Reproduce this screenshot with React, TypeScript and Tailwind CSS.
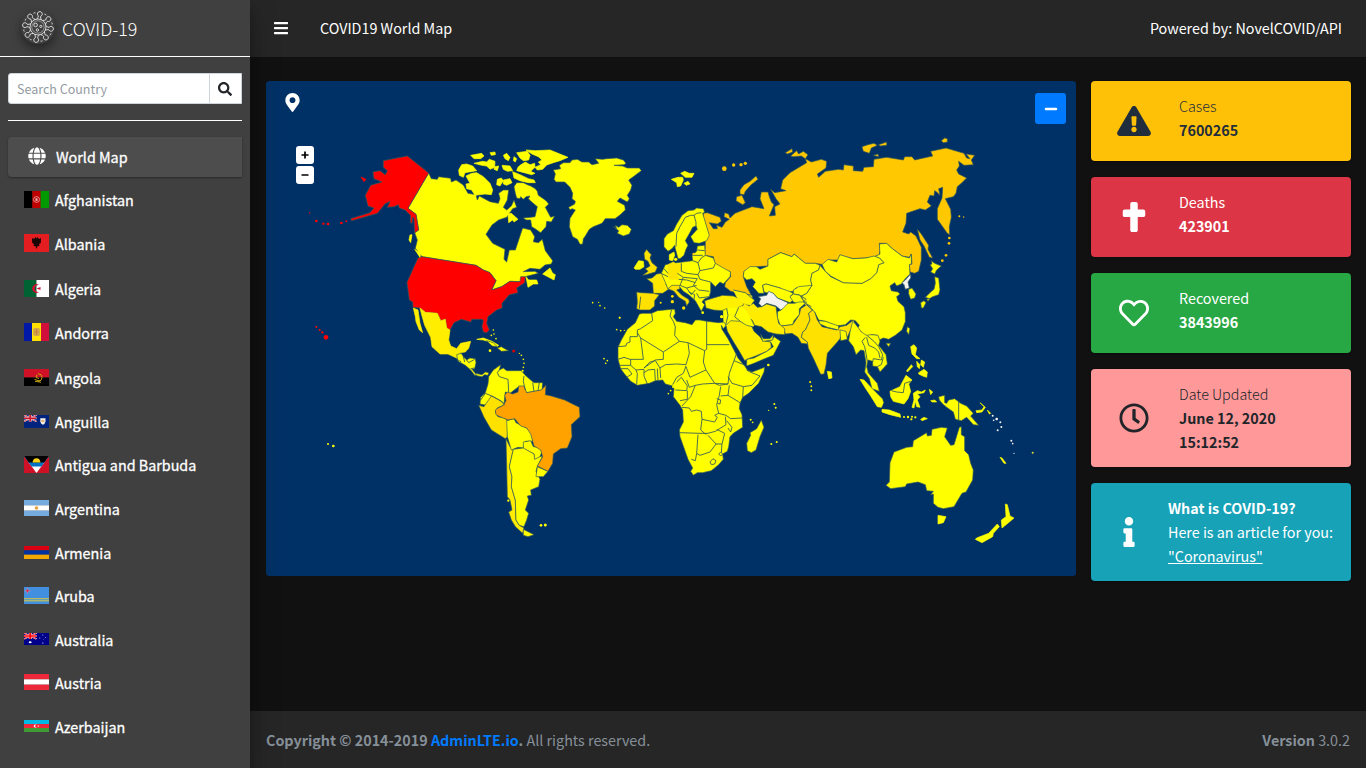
import React from "react";
import {
  FaBars,
  FaCross,
  FaExclamationTriangle,
  FaGlobe,
  FaInfo,
  FaMapMarkerAlt,
  FaMinus,
  FaRegClock,
  FaRegHeart,
  FaSearch,
} from "react-icons/fa";

const Y = "#ffff00";
const SEA = "#003166";
const LINE = "#33595a";

type Shape = [string, string];

/* Outlines shorter than islandMax characters are small islands: they are edged in their own colour. */
function Region({ x, y, shapes, lines = [], dots = [], islandMax = 0 }: {
  x: number;
  y: number;
  shapes: Shape[];
  lines?: string[];
  dots?: [number, number, number, string][];
  islandMax?: number;
}) {
  return (
    <g transform={`translate(${x} ${y}) scale(0.33333)`} strokeLinejoin="round">
      {shapes.map(([fill, points], i) => (
        <polygon key={i} points={points} fill={fill} stroke={points.length < islandMax ? fill : LINE} strokeWidth={2} />
      ))}
      {lines.map((points, i) => (
        <polyline key={i} points={points} fill="none" stroke={LINE} strokeWidth={2.6} />
      ))}
      {dots.map(([cx, cy, r, fill], i) => (
        <circle key={i} cx={cx} cy={cy} r={r} fill={fill} />
      ))}
    </g>
  );
}

const US = "#ff0000";
const RU = "#ffc800";
const IN = "#ffe100";
const NK = "#f4f3f0";

function WorldMap() {
  return (
    <svg className="block h-[495px] w-[810px]" viewBox="266 81 810 495">
      <rect x="266" y="81" width="810" height="495" fill={SEA} />
      <Region
        x={290}
        y={130}
        islandMax={200}
        shapes={[
          [Y, "416,129 424,146 442,148 446,140 482,145 484,156 498,150 520,165 534,190 558,194 562,210 568,198 600,215 625,220 630,206 626,190 640,180 656,180 652,210 640,232 650,240 664,228 672,210 680,232 668,236 650,262 626,270 606,285 588,313 608,340 645,358 642,388 650,396 658,360 676,360 698,294 722,300 734,320 730,335 745,338 757,328 766,362 788,392 784,402 765,405 750,418 720,415 700,425 735,424 745,430 705,440 690,455 660,454 635,470 605,480 618,452 600,428 580,420 558,406 396,380 376,355 382,330 374,308 386,300 378,253 354,235"],
          [US, "280,92 352,78 416,129 354,235 378,253 386,300 374,308 372,266 368,262 366,280 361,278 362,256 345,240 328,234 325,224 312,230 292,232 300,214 285,222 262,250 185,272 182,266 240,248 252,234 234,228 226,196 242,166 276,156 252,146 249,126 270,122 286,134 292,122 280,112"],
          [US, "213,141 228,148 222,155"],
          [US, "384,384 396,380 558,406 580,420 600,428 618,452 605,480 635,470 660,454 690,455 692,440 706,440 704,458 680,474 684,488 658,494 636,520 636,534 620,540 594,560 590,580 598,600 590,608 580,606 576,590 580,572 576,568 545,568 543,576 514,568 492,578 480,600 470,594 466,568 452,572 442,550 406,547 390,534 369,532 368,516 358,510 351,457"],
          ["#ffee00", "390,534 406,547 442,550 452,572 466,568 470,594 480,600 476,630 482,648 500,656 512,640 542,634 536,655 526,666 510,668 504,686 474,672 450,672 426,650 422,622 404,586 396,558"],
          ["#ffee00", "370,534 384,540 390,580 398,608 388,600 378,575 376,560"],
          [Y, "708,440 716,450 740,450 744,462 730,462 714,472"],
          [Y, "758,432 780,414 788,430 796,434 792,450"],
          [Y, "374,358 392,370 390,382"],
          [Y, "360,315 366,314 362,338 357,330"],
          [Y, "528,138 545,130 560,128 580,140 600,160 608,180 604,194 585,192 555,196 545,180 530,176 528,162 540,160"],
          [Y, "506,120 515,104 530,102 548,108 560,122 525,128 520,142 508,136"],
          [Y, "542,76 575,70 582,78 572,86 552,86"],
          [Y, "600,68 615,66 616,74 604,76"],
          [Y, "552,100 578,94 590,96 598,88 615,94 614,112 600,118 590,108 575,106"],
          [Y, "640,76 650,70 660,82 655,92 645,86"],
          [Y, "672,80 680,86 676,96 670,92"],
          [Y, "680,68 712,64 720,76 716,90 700,92 690,84"],
          [Y, "708,60 736,62 780,60 834,82 810,92 790,98 770,105 758,118 742,120 735,112 752,104 745,96 756,90 745,80 726,72"],
          [Y, "614,110 626,108 622,122 612,118"],
          [Y, "636,106 660,108 668,122 652,124 640,118"],
          [Y, "690,106 706,96 720,104 734,100 735,112 722,124 735,130 725,134 680,122 684,112"],
          [Y, "668,125 690,134 715,146 732,150 736,158 715,158 690,152 672,144"],
          [Y, "622,148 634,144 640,152 630,168 620,164"],
          [Y, "640,150 660,146 666,158 650,166 640,162"],
          [Y, "672,170 680,158 700,158 712,164 722,168 736,176 742,184 745,196 760,206 770,214 776,222 766,232 782,262 794,258 784,276 770,274 768,290 752,308 735,296 725,290 722,270 708,270 700,264 722,262 735,260 742,230 725,216 715,206 720,198 708,200 700,208 692,200 690,206 680,204 676,190"],
          [Y, "654,252 664,250 684,268 672,276 668,270 656,278"],
          [Y, "560,628 580,624 606,634 626,646 622,650 600,636 580,630"],
        ]}
        dots={[
          [59, 249, 2, US], [79, 273, 4, US], [100, 281, 3.5, US], [114, 282, 4, US], [154, 279, 4, US], [169, 274, 3, US],
          [79, 591, 3, US], [89, 600, 3, US], [97, 607, 3.5, US], [108, 622, 7, US],
          [610, 600, 2.5, Y], [612, 612, 2.5, Y], [618, 626, 2.5, Y], [604, 616, 2.5, Y],
          [114, 942, 3, Y], [130, 948, 4, Y],
        ]}
      />
      <Region
        x={740}
        y={130}
        shapes={[
          [RU, "-110,250 -98,248 -60,262 -56,274 -68,282 -92,278 -80,296 -68,296 -70,286 -54,292 -44,276 -32,268 -48,260 -46,248 -34,252 -30,264 -15,250 0,244 36,230 72,236 60,206 64,186 84,186 88,200 94,216 102,224 88,258 106,256 104,230 120,222 108,206 92,178 104,188 138,182 122,176 128,150 150,128 200,98 196,86 214,96 244,88 260,94 258,114 232,132 236,142 256,124 296,118 310,120 312,104 340,108 340,122 368,124 372,112 400,110 402,88 440,82 490,90 494,80 516,80 524,90 578,78 572,64 618,54 672,70 680,84 690,86 678,72 704,76 694,90 700,104 672,106 656,94 658,108 650,120 656,132 668,138 680,144 664,160 652,170 648,190 640,200 616,206 632,238 634,262 628,290 629,314 622,310 592,268 592,236 606,204 608,172 596,176 600,196 590,186 584,182 582,198 570,196 562,216 574,228 556,240 540,236 500,250 498,280 488,306 506,312 512,306 528,318 544,352 544,390 536,424 524,430 510,426 508,404 516,402 514,372 508,382 486,378 452,352 440,340 418,340 420,360 418,374 404,380 376,384 338,386 300,376 296,390 268,390 250,404 226,400 196,400 162,372 156,380 122,368 84,388 84,408 50,410 12,424 10,440 20,470 34,495 -10,488 -28,484 -46,470 -44,458 -28,440 -30,424 -66,424 -78,412 -76,400 -80,380 -106,376 -104,340 -104,326 -94,314 -110,262"],
          [RU, "0,180 12,164 30,154 48,138 54,148 32,166 16,184 12,194 0,192"],
          [RU, "-10,200 6,196 16,218 8,224 -12,212"],
          [RU, "136,68 156,56 158,66 142,72"],
          [RU, "152,78 170,62 176,72 190,64 204,74 196,86 184,78 160,80"],
          [RU, "366,50 384,44 402,40 412,46 394,54 388,70 370,64"],
          [RU, "416,44 440,36 440,46 420,48"],
          [RU, "400,76 414,72 416,80"],
          [RU, "604,32 614,24 622,26 622,36 610,38"],
          [RU, "532,298 544,312 566,346 564,358 578,384 568,382 552,348 540,330"],
          [Y, "10,440 12,424 30,410 50,410 60,418 84,408 84,388 122,368 156,380 162,372 196,400 226,400 240,406 236,420 216,430 212,450 216,468 196,472 168,474 160,484 140,486 120,474 78,462 68,466 70,480 72,490 56,490 44,476 38,470 46,456 36,446 20,450"],
          [Y, "240,406 256,424 272,440 310,458 366,460 392,446 410,428 416,404 432,398 418,384 404,380 420,372 418,342 440,340 452,352 486,378 508,384 514,372 514,402 508,404 510,432 496,446 484,462 470,468 464,458 450,468 454,482 474,486 480,492 470,500 474,514 492,530 496,548 496,575 486,600 466,616 446,628 430,624 418,630 412,616 394,614 380,622 366,620 364,606 352,596 358,586 346,572 332,570 316,584 290,588 256,574 236,570 224,546 198,530 184,498 200,490 216,466 212,450 216,430 236,420"],
          [Y, "246,404 264,388 290,396 300,374 338,386 378,384 402,378 418,384 432,398 416,404 410,428 392,446 366,460 310,458 272,438 256,424"],
          [NK, "512,432 512,444 504,456 508,474 496,478 492,464 486,458 496,450"],
          [Y, "506,478 516,474 528,492 524,504 512,508 506,492"],
          [Y, "570,404 576,402 574,392 584,400 604,408 590,420 584,432 572,426 578,416"],
          [Y, "584,440 596,444 600,480 596,494 578,500 568,506 556,502 572,486 582,478 586,460"],
          [Y, "542,518 552,512 558,518 550,534 544,534"],
          [Y, "560,508 570,506 564,514"],
          [Y, "502,590 510,596 506,614 500,604"],
          [Y, "438,640 452,640 446,650"],
          [Y, "68,466 78,462 120,474 148,484 160,490 150,500 162,508 150,518 112,504 100,490 80,488 72,486"],
          [NK, "62,506 54,500 80,496 86,484 100,490 112,504 144,518 140,532 122,540 108,528 80,520 66,530 56,520"],
          [Y, "160,480 176,470 216,466 200,490 184,498 176,494 160,492"],
          [Y, "150,500 160,492 180,496 190,512 196,520 176,522 160,516"],
          ["#fff400", "0,490 36,496 38,508 44,512 34,522 20,524 8,516 -4,506"],
          [Y, "112,545 124,540 144,520 164,520 176,516 200,516 196,520 178,536 178,554 162,572 158,584 122,588 112,564"],
          [IN, "122,588 158,584 178,554 182,536 200,524 218,540 206,550 210,570 196,600 188,606 184,622 202,636 204,642 184,640 174,622 156,610 136,612 130,596"],
          ["#ffec00", "-2,520 10,518 28,528 40,520 52,532 66,530 80,522 108,530 112,560 116,580 134,596 134,614 108,612 84,606 64,590 44,586 36,570 16,556"],
          [IN, "200,524 224,546 232,570 246,590 290,600 300,590 320,586 340,570 346,584 330,604 322,622 316,610 306,606 300,626 292,636 262,670 258,706 252,732 242,733 220,685 205,655 202,636 184,622 188,606 196,600 210,570 206,550 218,540"],
          [Y, "236,572 256,574 296,588 296,600 262,592 240,582"],
          [Y, "300,600 318,604 322,628 302,632"],
        ]}
        lines={["184,498 198,508 190,516 214,530"]}
        dots={[
          [-47, 116, 7, RU], [-19, 105, 5, RU], [3, 104, 5, RU], [16, 100, 5, RU],
          [628, 324, 4, RU], [627, 340, 4, RU], [618, 376, 4, RU], [607, 392, 4, RU], [658, 259, 3, RU], [671, 261, 2, RU],
        ]}
      />
      <Region
        x={540}
        y={130}
        islandMax={72}
        shapes={[
          [Y, "40,120 62,116 58,106 70,98 90,98 96,90 112,88 126,96 146,96 156,104 176,100 166,86 188,88 200,86 230,84 250,90 258,100 252,104 222,106 248,108 262,114 298,114 304,122 280,140 266,150 276,166 272,180 262,196 268,206 262,216 240,204 232,214 254,226 256,240 240,255 225,266 196,266 186,280 160,290 148,298 136,318 130,326 128,342 120,343 112,328 98,320 88,290 90,265 106,240 96,236 90,240 86,232 104,222 106,214 96,206 98,190 90,172 74,156 48,156 42,148 46,132"],
          [Y, "220,290 230,296 226,286 236,292 246,284 262,286 274,298 268,312 250,318 232,310 236,302"],
          [Y, "394,148 414,142 428,142 430,150 422,168 412,170 410,158"],
          [Y, "422,130 434,124 448,130 462,130 456,142 436,142"],
          [Y, "432,160 444,154 450,162 438,166"],
          [Y, "282,414 296,392 310,394 312,410 300,418 286,418"],
          [IN, "312,370 320,358 326,366 334,374 330,384 336,398 352,412 346,426 318,434 308,436 324,424 316,416 330,408 324,394 314,388"],
          [Y, "372,326 382,312 400,302 410,282 426,256 444,242 462,240 470,234 490,236 494,246 488,250 500,290 508,316 500,332 478,340 462,338 452,320 464,306 472,298 468,288 458,292 452,304 444,318 436,332 444,346 438,358 432,376 420,386 414,386 406,356 404,346 396,356 384,364 372,350"],
          [Y, "388,374 402,366 404,376 398,392 388,390"],
          ["#ffe800", "320,446 336,444 350,432 364,430 384,440 384,456 378,462 386,478 368,490 340,490 338,460"],
          [IN, "290,486 302,488 340,490 358,494 344,512 344,528 330,540 300,540 290,536 292,516"],
          [Y, "364,430 376,404 400,400 458,392 456,376 470,364 472,348 494,346 496,376 520,384 526,400 550,414 572,426 570,440 550,462 540,456 526,470 512,456 512,484 508,500 492,508 486,516 494,524 484,544 476,530 466,512 446,494 430,484 420,472 400,480 384,478 378,462"],
          ["#ffe600", "384,404 400,396 412,404 424,400 424,424 412,430 416,448 388,448 384,430"],
          [IN, "384,476 396,466 418,466 420,476 410,480 426,496 446,508 448,516 440,528 436,514 416,502 402,484"],
          ["#fff000", "494,512 520,504 548,496 580,498 610,510 610,526 590,534 560,536 546,542 520,540 498,534"],
          [Y, "550,542 566,534 606,530 620,544 642,588 620,590 580,576 552,590"],
          ["#fff400", "580,480 616,488 640,508 632,526 610,520 590,500"],
        ]}
        lines={[
          "408,350 410,310 420,290 436,262 452,256 462,256 468,276 468,290",
          "462,256 470,250 484,248",
          "302,500 298,536",
          "424,400 424,424 440,430 474,434 480,422 474,398 458,392",
          "474,398 484,384 496,376", "480,422 520,414 526,400", "474,434 480,448 512,456",
          "412,430 430,442 472,446", "416,448 440,450 466,458", "430,442 420,466 440,474 470,466",
          "472,446 460,466 476,480 508,484", "440,474 454,494 466,480", "470,490 478,504 508,500",
          "364,430 384,440", "372,416 384,430", "456,376 488,376", "472,360 494,362", "446,486 464,494 462,508",
          "560,536 564,556 556,590", "596,532 584,560 620,590", "580,480 616,488 640,508",
        ]}
        dots={[
          [158, 518, 2.5, Y], [176, 517, 2, Y], [180, 527, 2.5, Y], [194, 534, 2.5, Y], [239, 563, 3, Y],
          [407, 388, 5, Y], [461, 372, 4, RU], [397, 499, 4, IN], [397, 515, 5, IN], [431, 534, 5, IN], [362, 518, 3, IN],
          [488, 548, 4, Y], [545, 560, 5, Y], [500, 522, 3, Y],
        ]}
      />
      <Region
        x={600}
        y={290}
        shapes={[
          [Y, "64,150 82,118 106,98 118,72 128,70 155,70 172,62 215,58 224,58 226,70 220,80 230,94 256,98 276,104 286,90 300,90 320,94 356,98 372,96 378,106 370,116 364,106 366,118 384,146 402,180 414,204 436,230 442,240 456,246 494,232 492,246 476,280 446,310 428,322 420,340 418,356 426,374 428,412 400,430 390,440 386,470 382,484 368,492 370,508 356,524 334,542 308,548 292,548 280,556 272,544 278,534 264,508 252,474 240,440 238,420 250,396 248,360 240,346 220,320 222,296 218,288 196,282 188,270 166,272 148,280 112,286 92,274 72,250 62,236 54,208 54,172"],
          [Y, "440,208 462,204 500,184 520,170 512,156 488,152 516,150 522,140 542,154 520,196 490,208 462,220 440,228"],
          ["#ffee00", "378,106 392,92 420,94 440,106 456,110 462,124 480,140 488,152 512,156 514,172 500,184 462,200 440,208 434,212 418,184 402,158 382,124"],
          [Y, "482,132 490,146 510,146 520,134 518,150 488,154"],
          [Y, "484,390 492,412 480,440 468,480 454,488 442,482 440,460 452,436 450,428 470,416"],
        ]}
        lines={[
          "155,70 158,92 122,116 112,120 112,140 90,140 90,156 80,160 78,168 54,170",
          "112,128 122,144 190,186 238,154 224,136 226,110 220,94 210,78 215,58",
          "122,144 130,208 90,208 72,202 54,208",
          "190,186 190,208 166,210 132,234",
          "238,154 264,158 314,182 320,178 320,94",
          "320,164 388,164",
          "264,158 268,190 258,224 230,222 196,224 180,234",
          "314,182 310,216 318,240 300,248 270,262 258,230",
          "318,240 344,280 384,282 388,250 402,212 410,190",
          "402,212 436,226",
          "384,260 396,280 430,290 456,286 480,258 450,246 440,240",
          "384,282 358,286 344,280 308,282 286,286 268,292 260,270",
          "286,286 272,320 246,348",
          "226,300 260,302 262,288 244,262 230,276",
          "262,302 262,328 240,332",
          "246,352 268,354 274,364 290,360 304,364 306,388 344,396 352,382 344,376 356,370 350,344 358,316 362,290",
          "362,318 384,316 388,286",
          "384,316 420,338",
          "430,290 428,322",
          "356,370 378,376 392,386 426,384",
          "306,388 302,420 316,432 346,424 378,404 376,380",
          "238,428 300,430 322,430",
          "294,434 290,490 286,512 274,508",
          "290,490 300,496 330,486 348,462 324,436",
          "348,462 366,462 374,430 350,418",
          "366,462 364,488",
          "380,392 396,412 392,426 384,414",
          "92,208 92,226 60,226",
          "60,236 84,236 96,252 80,262",
          "92,226 108,240 112,250 110,284",
          "108,240 132,238 132,258 142,282",
          "132,248 144,240 164,238 166,272",
          "172,236 174,270",
          "180,234 182,264",
          "132,234 150,216 166,212 180,234",
          "258,228 250,250 230,262 218,284",
          "339,506 348,512 344,522 334,524 330,516 339,506",
          "362,486 368,492 362,498 356,492 362,486",
          "350,326 362,330 360,342 352,340",
        ]}
        dots={[
          [50, 119, 2.5, Y], [62, 122, 2.5, Y], [73, 121, 2, Y], [59, 83, 2.5, Y], [12, 206, 2.5, Y], [22, 212, 2.5, Y], [17, 220, 2.5, Y],
          [219, 291, 3, Y], [212, 302, 2.5, Y], [205, 311, 2.5, Y], [505, 225, 4, Y],
          [631, 276, 2.5, Y], [634, 289, 2.5, Y], [634, 301, 2.5, Y], [523, 342, 3, Y], [527, 353, 3, Y], [506, 361, 2, Y],
          [452, 389, 3, Y], [458, 397, 2.5, Y], [514, 462, 3, Y], [530, 456, 3, Y],
        ]}
      />
      <Region
        x={800}
        y={320}
        islandMax={150}
        shapes={[
          [Y, "158,4 168,14 184,36 200,46 214,44 234,46 240,64 236,76 258,104 262,132 240,156 232,140 218,138 218,124 204,120 200,140 206,160 216,172 232,190 238,214 216,206 208,176 194,156 198,128 192,92 182,90 168,104 160,80 146,62 150,36"],
          [Y, "82,154 94,156 96,174 86,176"],
          [Y, "180,178 192,180 216,206 246,236 250,248 244,262 232,260 212,228 196,204"],
          [Y, "246,268 268,270 300,282 302,292 270,284 246,276"],
          [Y, "270,214 278,210 300,200 318,166 336,180 326,192 332,214 324,236 312,252 280,244 272,230"],
          [Y, "340,220 352,212 364,216 376,210 372,218 352,222 360,230 352,240 360,262 350,260 346,244 342,264 336,262 342,240"],
          [Y, "332,80 342,74 350,84 346,104 360,116 350,116 336,102"],
          [Y, "350,124 360,134 358,146 352,140"],
          [Y, "364,120 374,126 370,142 362,134"],
          [Y, "356,158 372,148 382,156 380,172 368,168 356,162"],
          [Y, "334,134 338,140 322,156 320,152"],
          [Y, "388,208 398,216 392,224"],
          [Y, "392,242 404,240 410,246 396,246"],
          [Y, "362,298 372,292 382,296 366,302"],
          [Y, "416,230 434,226 434,248 440,250 446,240 464,236 482,250 500,258 520,280 512,288 536,316 520,314 500,292 484,302 466,298 460,276 440,262 428,252 418,240"],
          [Y, "528,272 546,270 552,260 540,248 556,262 546,276 530,278"],
          [Y, "562,270 572,280 568,282"],
          [Y, "600,412 606,414 618,430 612,430"],
          [Y, "338,380 340,362 380,338 382,348 394,346 396,328 424,322 442,324 434,350 452,376 462,374 478,322 484,320 484,344 494,350 494,392 506,404 512,430 520,450 518,480 498,516 486,520 462,560 430,566 414,562 400,550 400,522 392,524 400,514 380,512 376,494 354,486 320,492 316,500 272,506 258,496 268,486 270,428 282,396 320,382"],
          [Y, "414,586 438,590 430,608 414,612"],
          [Y, "616,552 622,554 630,588 642,594 628,606 606,624 604,600 618,590"],
          [Y, "592,612 598,620 580,640 578,650 546,668 526,658 530,654 566,640"],
        ]}
        lines={[
          "196,52 186,64 194,80 198,100 202,124",
          "200,46 210,54 224,66 236,80 248,104 244,120 220,116 218,126",
          "200,52 206,76 224,84 236,96 240,114",
          "232,140 244,134 250,112",
          "274,212 290,216 310,218 314,190 332,184",
          "476,246 476,302",
          "202,156 212,160",
        ]}
        dots={[
          [312, 291, 3, Y], [324, 291, 3.5, Y], [334, 298, 3.5, Y], [346, 292, 3.5, Y], [336, 290, 3, Y],
          [30, 186, 2.5, Y], [34, 199, 2.5, Y], [34, 211, 2.5, Y],
          [578, 287, 3, NK], [590, 297, 4, NK], [601, 307, 3, NK], [604, 321, 3, NK], [593, 331, 3, NK], [581, 301, 2.5, NK],
          [634, 362, 3, NK], [638, 371, 2.5, NK], [642, 400, 2, NK], [698, 398, 3, "#dce22c"],
        ]}
      />
      <Region
        x={460}
        y={340}
        shapes={[
          [Y, "-10,44 4,40 10,50 20,60 30,54 46,56 48,68 44,86 36,88 46,100 66,104 76,96 86,98 84,106 74,104 66,110 44,106 32,90 16,76 -6,64"],
          [Y, "86,110 100,90 122,74 118,90 130,84 140,92 184,92 196,106 212,120 222,128 248,128 246,150 200,158 190,140 176,140 150,160 136,156 132,192 110,184 96,170 80,196 60,192 62,172 76,158 84,132"],
          [IN, "56,196 72,200 94,168 114,178 128,186 134,194 112,204 106,216 114,230 134,234 144,244 142,290 136,296 94,270 72,232"],
          ["#ffec00", "138,296 150,320 160,328 148,380 156,410 154,440 166,480 168,540 178,556 192,564 188,580 166,560 154,540 146,516 156,510 150,480 142,470 140,380"],
          [Y, "140,242 162,236 168,248 200,264 216,280 218,304 196,304 190,324 174,322 154,330 142,290"],
          [Y, "190,306 212,302 220,320 236,322 246,334 240,350 236,358 222,358 222,342 190,326"],
          [Y, "160,328 190,324 222,342 224,358 240,350 248,348 232,380 228,394 240,418 236,440 212,450 214,466 202,468 206,480 196,510 206,520 200,540 192,560 178,556 168,540 166,480 154,440 156,410 148,380"],
          [Y, "190,568 222,584 204,590 190,586"],
          [Y, "232,380 264,394 250,410 228,410"],
          ["#ffa200", "114,204 130,196 138,182 134,166 142,156 158,162 174,156 176,138 192,138 200,158 222,154 244,150 258,136 256,164 274,168 314,180 358,202 360,230 334,254 336,290 322,324 302,326 280,342 278,370 264,394 232,378 248,350 242,330 222,318 212,282 200,264 182,258 164,236 144,240 120,230 108,224 106,210"],
          [Y, "80,2 100,8 112,20 96,18"],
          [Y, "112,24 124,20 134,26 146,32 124,34"],
        ]}
        lines={[
          "118,90 112,98 118,110 144,118 146,156",
          "62,180 76,160 100,170 124,184 134,196",
          "192,108 190,124 196,150",
          "218,128 222,154",
          "238,128 234,152",
          "10,50 14,66", "20,60 26,68 44,58", "44,84 32,86", "46,100 50,108", "-10,58 4,66",
        ]}
        dots={[
          [90, 32, 4, Y], [161, 33, 4.5, "#d60000"], [178, 40, 2, Y], [184, 46, 2.5, Y], [190, 58, 2.5, Y], [192, 70, 2.5, Y], [190, 82, 2.5, Y], [188, 92, 3, Y],
          [243, 556, 4, Y], [256, 555, 4.5, Y], [145, 482, 3.5, Y],
        ]}
      />
    </svg>
  );
}

function Virus() {
  const spikes = [0, 45, 90, 135, 180, 225, 270, 315];
  return (
    <svg className="h-[34px] w-[34px] rounded-full shadow-[0_3px_6px_rgba(0,0,0,0.16),0_6px_12px_rgba(0,0,0,0.3)]" viewBox="-17 -17 34 34" fill="none" stroke="#ececec" strokeWidth="0.85">
      <circle r="8" />
      <circle r="6.2" strokeWidth="0.5" />
      {spikes.map((a) => (
        <g key={a} transform={`rotate(${a + 8})`}>
          <path d="M-2.4 -7.7 Q-1.1 -9 -1.1 -11 A2.4 2.4 0 1 1 1.1 -11 Q1.1 -9 2.4 -7.7" />
          <path d="M4.6 -13.6 q1.2 -.4 1.8 .9" strokeWidth="0.8" />
        </g>
      ))}
      <circle cx="-2.4" cy="-2" r="1.8" />
      <circle cx="2.8" cy="-.6" r="1.1" />
      <circle cx="-.6" cy="3" r="1.2" />
    </svg>
  );
}

function Stripes({ colors, vertical = false }: { colors: string[]; vertical?: boolean }) {
  const n = colors.length;
  return (
    <>
      {colors.map((c, i) =>
        vertical ? (
          <rect key={i} x={(25 / n) * i} y="0" width={25 / n + 0.05} height="18" fill={c} />
        ) : (
          <rect key={i} x="0" y={(18 / n) * i} width="25" height={18 / n + 0.05} fill={c} />
        )
      )}
    </>
  );
}

function UnionJack({ red }: { red: string }) {
  return (
    <>
      <path d="M0 0 L12.5 9 M12.5 0 L0 9" stroke="#fff" strokeWidth="2" />
      <path d="M0 0 L12.5 9 M12.5 0 L0 9" stroke={red} strokeWidth="0.9" />
      <path d="M6.25 0 V9 M0 4.5 H12.5" stroke="#fff" strokeWidth="3" />
      <path d="M6.25 0 V9 M0 4.5 H12.5" stroke={red} strokeWidth="2" />
    </>
  );
}

type Country = { name: string; row: string; flag: string; art: React.ReactNode };

const countries: Country[] = [
  {
    name: "Afghanistan", row: "h-[44px]", flag: "h-[17px]",
    art: (
      <>
        <Stripes vertical colors={["#000", "#bf0000", "#009900"]} />
        <circle cx="12.5" cy="9" r="3" fill="none" stroke="#e6a0a0" strokeWidth="0.9" />
        <rect x="11.5" y="7.8" width="2" height="2.6" fill="#efc0c0" />
      </>
    ),
  },
  {
    name: "Albania", row: "h-[45px]", flag: "h-[18px]",
    art: (
      <>
        <rect width="25" height="18" fill="#e41e20" />
        <path d="M8 4 L10 5 L11.5 3 L12.5 4.5 L13.5 3 L15 5 L17 4 L16.8 9 L15 10 L15.5 12 L13.6 12 L12.5 15 L11.4 12 L9.5 12 L10 10 L8.2 9z" fill="#1a0505" />
      </>
    ),
  },
  {
    name: "Algeria", row: "h-[44px]", flag: "h-[17px]",
    art: (
      <>
        <Stripes vertical colors={["#006233", "#fff"]} />
        <path d="M15 5.4 A4.2 4.5 0 1 0 15 12.6 A3.5 3.7 0 1 1 15 5.4z" fill="#d21034" />
        <path d="M12.6 9 L16.5 7.4 V10.6z" fill="#d21034" />
      </>
    ),
  },
  {
    name: "Andorra", row: "h-[45px]", flag: "h-[18px]",
    art: (
      <>
        <rect width="25" height="18" fill="#0018a8" />
        <rect x="8" width="17" height="18" fill="#fedf00" />
        <rect x="17" width="8" height="18" fill="#d0103a" />
        <rect x="9.2" y="5" width="6.6" height="8" rx="1.5" fill="#d0a648" />
        <path d="M12.5 6 V12 M10 9 H15" stroke="#c7813f" />
      </>
    ),
  },
  {
    name: "Angola", row: "h-[44px]", flag: "h-[17px]",
    art: (
      <>
        <Stripes colors={["#ce1126", "#000"]} />
        <path d="M14 5 A4 4 0 0 1 14 13 M11 13 L17 14 M13 6 L12 9 L15 10 M10.5 11 L16 13" fill="none" stroke="#c8a20c" strokeWidth="1" />
      </>
    ),
  },
  {
    name: "Anguilla", row: "h-[43px]", flag: "h-[13px]",
    art: (
      <>
        <rect width="25" height="18" fill="#00247d" />
        <UnionJack red="#cf142b" />
        <path d="M16.3 4.5 H21.5 V9 Q21 12.5 18.9 13.5 Q16.5 12 16.3 9z" fill="#f4f4ee" />
        <circle cx="18.9" cy="8.2" r="1.7" fill="#e8b070" />
      </>
    ),
  },
  {
    name: "Antigua and Barbuda", row: "h-[44px]", flag: "h-[17px]",
    art: (
      <>
        <rect width="25" height="18" fill="#ce1126" />
        <path d="M0 0 H25 L12.5 18z" fill="#fff" />
        <path d="M0 0 H25 L17.4 11 H7.6z" fill="#0072c6" />
        <path d="M0 0 H25 L20.2 7 H4.8z" fill="#000" />
        <path d="M8.5 7 Q9 2.5 12.5 2.5 Q16 2.5 16.5 7z" fill="#fcd116" />
      </>
    ),
  },
  {
    name: "Argentina", row: "h-[44px]", flag: "h-[16px]",
    art: (
      <>
        <Stripes colors={["#74acdf", "#fff", "#74acdf"]} />
        <circle cx="12.5" cy="9" r="1.9" fill="#e2a544" />
      </>
    ),
  },
  { name: "Armenia", row: "h-[43px]", flag: "h-[13px]", art: <Stripes colors={["#d90012", "#0033a0", "#f2a800"]} /> },
  {
    name: "Aruba", row: "h-[44px]", flag: "h-[17px]",
    art: (
      <>
        <rect width="25" height="18" fill="#418fde" />
        <rect y="11.8" width="25" height="1.2" fill="#cfc34a" />
        <rect y="14" width="25" height="1.2" fill="#cfc34a" />
        <path d="M3.5 1 L4.3 3.2 L6.5 4 L4.3 4.8 L3.5 7 L2.7 4.8 L.7 4 L2.7 3.2z" fill="#d22a4a" stroke="#e8c0d8" strokeWidth=".3" />
      </>
    ),
  },
  {
    name: "Australia", row: "h-[43px]", flag: "h-[12px]",
    art: (
      <>
        <rect width="25" height="18" fill="#00008b" />
        <UnionJack red="#ff0000" />
        <circle cx="6.2" cy="13.8" r="1.5" fill="#fff" />
        <g fill="#c8c8ea">
          <circle cx="18.8" cy="3" r=".7" />
          <circle cx="15.8" cy="7.6" r=".7" />
          <circle cx="21.6" cy="6.6" r=".7" />
          <circle cx="19.6" cy="9.4" r=".5" />
          <circle cx="18.8" cy="15" r=".8" />
        </g>
      </>
    ),
  },
  { name: "Austria", row: "h-[44px]", flag: "h-[16px]", art: <Stripes colors={["#ed2939", "#fff", "#ed2939"]} /> },
  {
    name: "Azerbaijan", row: "h-[40px]", flag: "h-[12px]",
    art: (
      <>
        <Stripes colors={["#00b9e4", "#ed2939", "#3f9c35"]} />
        <path d="M12.8 7.2 A2 2.2 0 1 0 12.8 10.8 A1.6 1.7 0 1 1 12.8 7.2z" fill="#fff" />
        <circle cx="14.3" cy="9" r=".9" fill="#fff" />
      </>
    ),
  },
];

function InfoBox({ className, icon, iconBox, text = "", children }: {
  className: string;
  icon: React.ReactNode;
  iconBox: string;
  text?: string;
  children: React.ReactNode;
}) {
  return (
    <div className={`flex rounded p-2 shadow-[0_0_1px_rgba(0,0,0,0.125),0_1px_3px_rgba(0,0,0,0.2)] ${className}`}>
      <div className={`flex shrink-0 items-center justify-center text-[30px] ${iconBox}`}>{icon}</div>
      <div className={`flex flex-col justify-center whitespace-nowrap pl-2.5 leading-6 ${text}`}>{children}</div>
    </div>
  );
}

export default function App() {
  return (
    <div className="flex h-screen w-full overflow-hidden bg-[#111111] font-['Noto_Sans_CJK_JP','Noto_Sans_CJK_SC',sans-serif] text-[14.33px] leading-6 text-white">
      <aside className="z-10 flex h-full w-[250px] shrink-0 flex-col bg-[#404040] shadow-[0_14px_28px_rgba(0,0,0,0.25),0_10px_10px_rgba(0,0,0,0.22)]">
        <div className="flex h-[57px] shrink-0 items-center border-b border-white pl-[21px]">
          <div className="-mt-0.5"><Virus /></div>
          <span className="ml-[7px] text-[17.9px] font-light">COVID-19</span>
        </div>
        <div className="mx-2 mt-4 flex h-[31px] shrink-0 rounded-l-[3px] border border-[#ced4da] bg-white">
          <div className="flex-1 pl-2 text-[12.5px] leading-[30px] text-[#939ba2]">Search Country</div>
          <div className="flex w-8 items-center justify-center border-l border-[#ced4da] pr-0.5 text-[14px] text-[#212529]">
            <FaSearch />
          </div>
        </div>
        <div className="mx-2 mt-4 h-px shrink-0 bg-white" />
        <div className="ml-2 mr-2 mt-4 flex h-10 shrink-0 items-center rounded-l bg-[#4d4d4d] shadow-[0_1px_3px_rgba(0,0,0,0.12),0_1px_2px_rgba(0,0,0,0.24)]">
          <FaGlobe className="-mt-0.5 ml-5 text-[18px]" />
          <span className="ml-[10px] [-webkit-text-stroke:0.3px_white]">World Map</span>
        </div>
        <nav className="flex flex-col pl-6 pt-[11px]">
          {countries.map((c) => (
            <div key={c.name} className={`flex shrink-0 items-start ${c.row}`}>
              <div className="flex h-[22px] w-[25px] items-center">
                <svg className={`block w-[25px] ${c.flag}`} viewBox="0 0 25 18" preserveAspectRatio="none">
                  {c.art}
                </svg>
              </div>
              <span className="ml-1.5 [-webkit-text-stroke:0.3px_white]">{c.name}</span>
            </div>
          ))}
        </nav>
      </aside>

      <div className="flex min-w-0 flex-1 flex-col">
        <header className="flex h-[57px] shrink-0 items-center bg-[#262626] px-6 pb-0.5">
          <FaBars className="w-[14px] text-[16px]" />
          <span className="ml-8">COVID19 World Map</span>
          <span className="ml-auto">Powered by: NovelCOVID/API</span>
        </header>

        <main className="flex flex-1 items-start gap-[15px] px-4 pt-6">
          <section className="relative h-[495px] w-[810px] shrink-0 overflow-hidden rounded bg-[#003166]">
            <WorldMap />
            <FaMapMarkerAlt className="absolute left-[17px] top-[12px] text-[19px]" />
            <button className="absolute right-2.5 top-3 flex h-[31px] w-[31px] items-center justify-center rounded-[3px] bg-[#007bff] text-[14px]">
              <FaMinus />
            </button>
            <div className="absolute left-[30px] top-[65px] flex flex-col gap-0.5 text-black">
              <span className="flex h-[18px] w-[18px] items-center justify-center rounded-[3px] bg-white">
                <svg className="h-2 w-2" viewBox="0 0 8 8"><path d="M4 0.5V7.5M0.5 4H7.5" stroke="#000" strokeWidth="1.7" /></svg>
              </span>
              <span className="flex h-[18px] w-[18px] items-center justify-center rounded-[3px] bg-white">
                <svg className="h-2 w-2" viewBox="0 0 8 8"><path d="M0.5 4H7.5" stroke="#000" strokeWidth="1.7" /></svg>
              </span>
            </div>
          </section>

          <section className="flex w-[260px] shrink-0 flex-col gap-4">
            <InfoBox className="h-20 bg-[#ffc107] text-[#1f2d3d]" text="pb-1.5" iconBox="w-[70px]" icon={<FaExclamationTriangle className="w-[34px]" />}>
              <span className="font-light">Cases</span>
              <span className="font-bold">7600265</span>
            </InfoBox>
            <InfoBox className="h-20 bg-[#dc3545]" text="pb-1.5" iconBox="w-[70px]" icon={<FaCross />}>
              <span>Deaths</span>
              <span className="font-bold">423901</span>
            </InfoBox>
            <InfoBox className="h-20 bg-[#28a745]" text="pb-1.5" iconBox="w-[70px]" icon={<FaRegHeart />}>
              <span>Recovered</span>
              <span className="font-bold">3843996</span>
            </InfoBox>
            <InfoBox className="h-[98px] bg-[#ff9999] text-[#212529]" iconBox="w-[70px]" icon={<FaRegClock />}>
              <span className="font-light">Date Updated</span>
              <span className="font-bold">June 12, 2020</span>
              <span className="font-bold">15:12:52</span>
            </InfoBox>
            <InfoBox className="h-[98px] bg-[#17a2b8]" iconBox="w-[59px]" icon={<FaInfo />}>
              <span className="font-bold">What is COVID-19?</span>
              <span>Here is an article for you:</span>
              <span className="underline">"Coronavirus"</span>
            </InfoBox>
          </section>
        </main>

        <footer className="flex h-[57px] shrink-0 items-center justify-between bg-[#262626] px-4 text-[#869099]">
          <span>
            <b>Copyright © 2014-2019 <span className="text-[#007bff]">AdminLTE.io</span>.</b> All rights reserved.
          </span>
          <span><b>Version</b> 3.0.2</span>
        </footer>
      </div>
    </div>
  );
}
